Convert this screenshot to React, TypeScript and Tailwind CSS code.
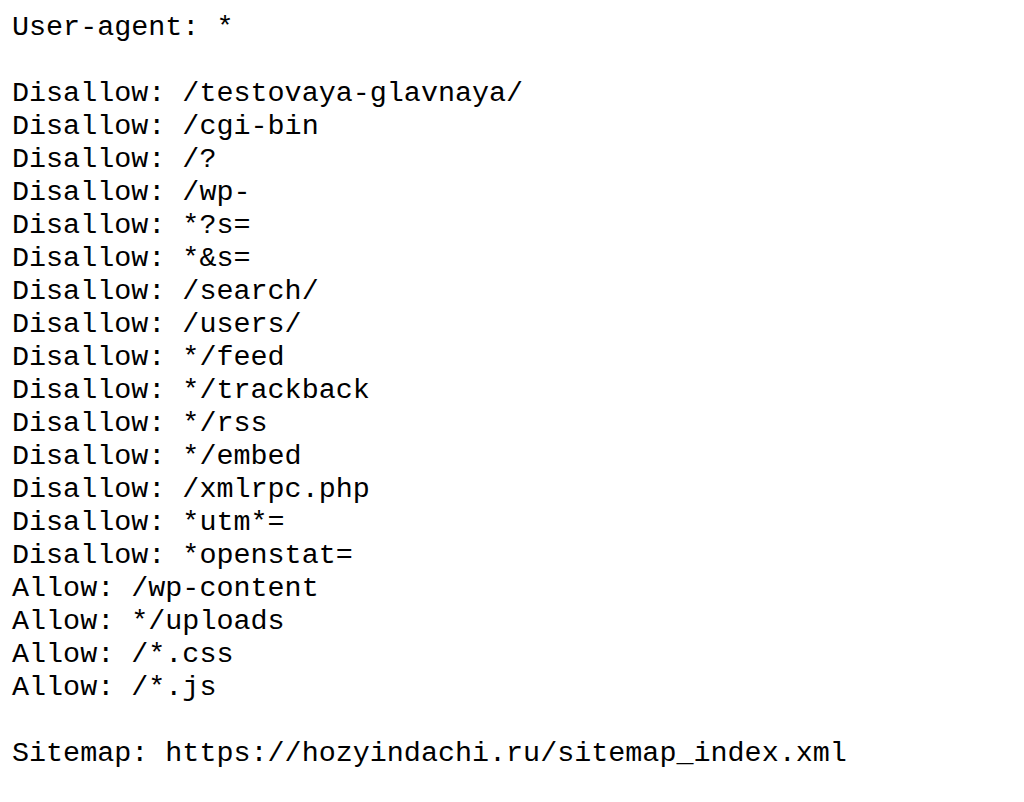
import React from "react";

const lines = [
  "User-agent: *",
  "",
  "Disallow: /testovaya-glavnaya/",
  "Disallow: /cgi-bin",
  "Disallow: /?",
  "Disallow: /wp-",
  "Disallow: *?s=",
  "Disallow: *&s=",
  "Disallow: /search/",
  "Disallow: /users/",
  "Disallow: */feed",
  "Disallow: */trackback",
  "Disallow: */rss",
  "Disallow: */embed",
  "Disallow: /xmlrpc.php",
  "Disallow: *utm*=",
  "Disallow: *openstat=",
  "Allow: /wp-content",
  "Allow: */uploads",
  "Allow: /*.css",
  "Allow: /*.js",
  "",
  "Sitemap: https://hozyindachi.ru/sitemap_index.xml",
];

const App: React.FC = () => {
  return (
    <div className="w-[1024px] h-[802px] bg-white overflow-hidden">
      <pre className="pl-[12px] pt-[11px] text-[28.4px] leading-[33px] text-black font-['Liberation_Mono','Courier_New',monospace]">
        {lines.map((line, i) => (
          <div key={i} className="h-[33px] whitespace-pre">
            {line}
          </div>
        ))}
      </pre>
    </div>
  );
};

export default App;
